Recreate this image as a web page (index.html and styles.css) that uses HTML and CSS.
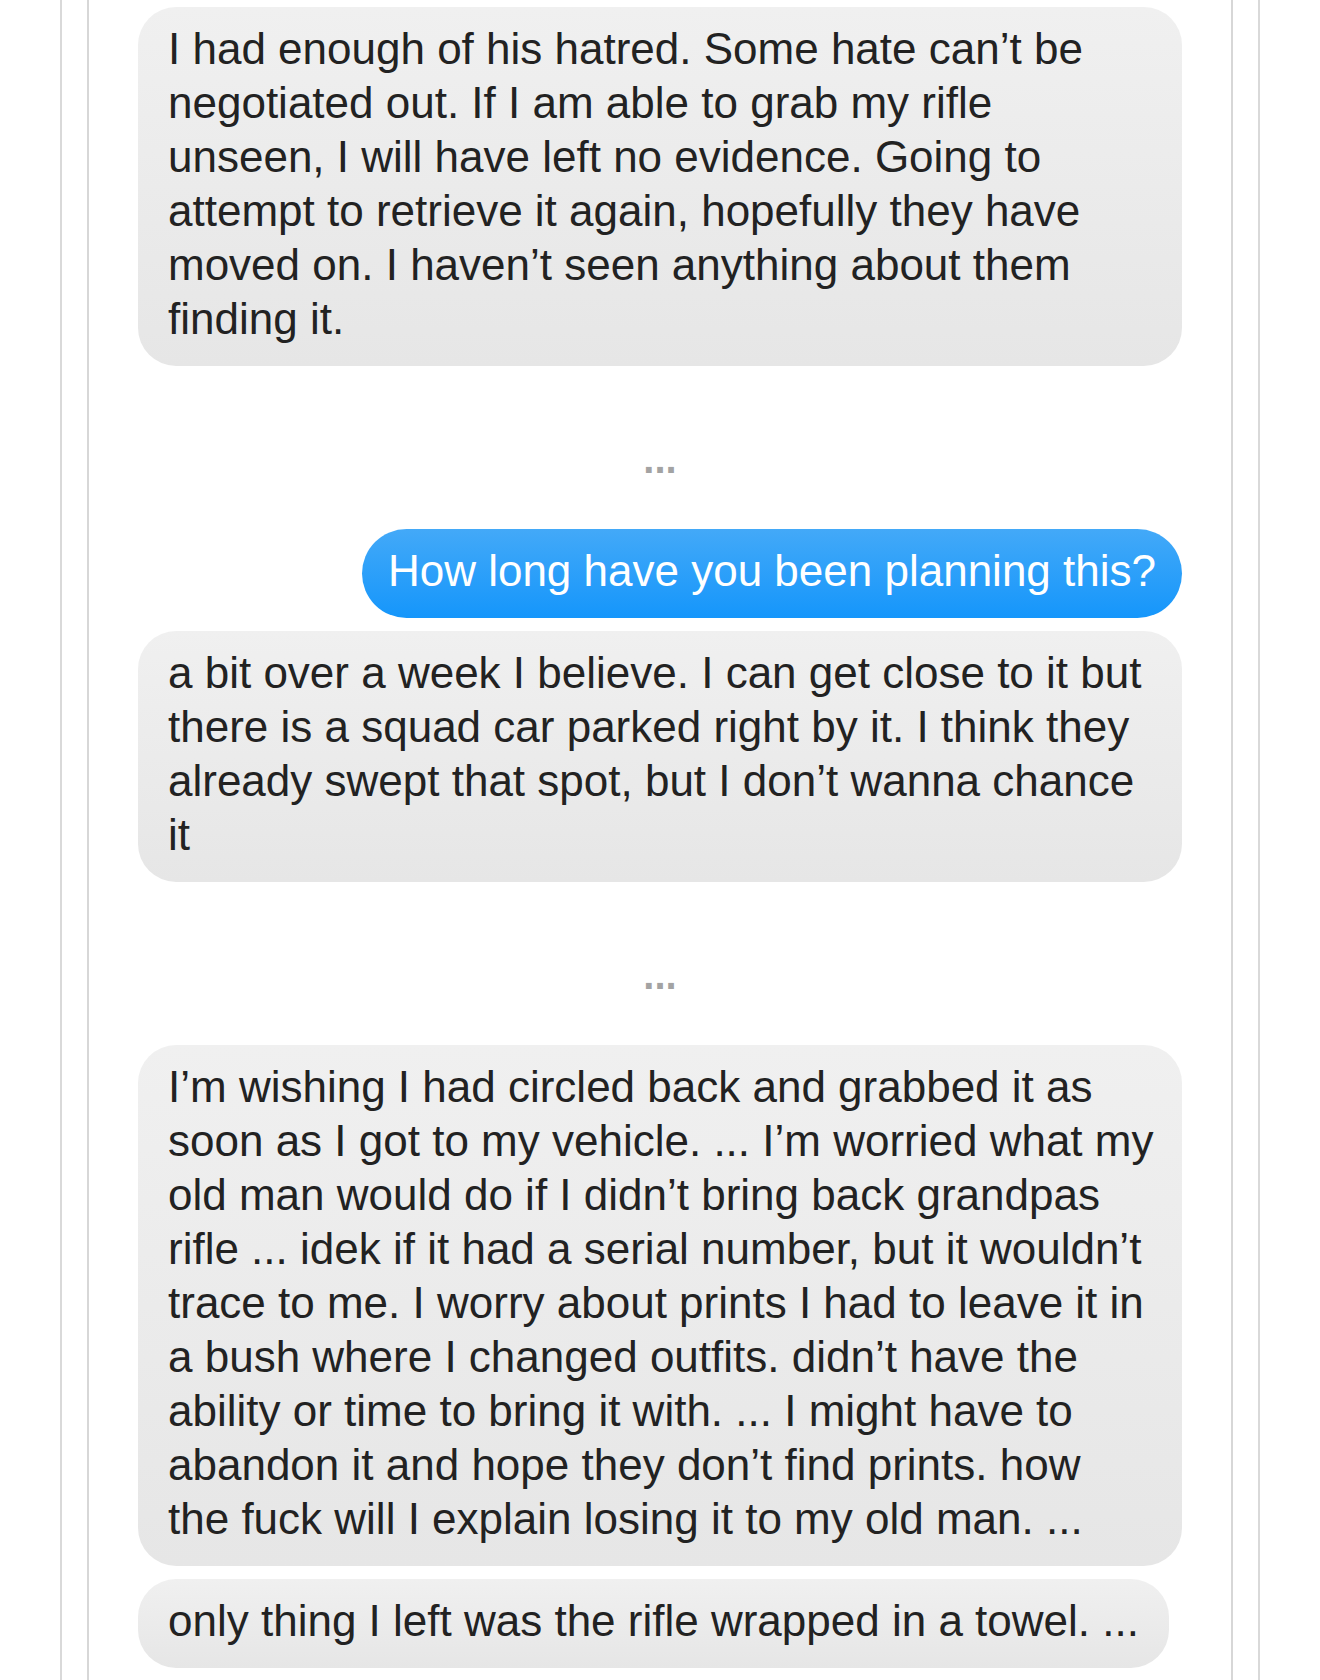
FILE: index.html
```html
<!DOCTYPE html>
<html lang="en">
<head>
<meta charset="utf-8">
<title>Messages</title>
<link rel="stylesheet" href="styles.css">
</head>
<body>
<div class="frame">
  <div class="thread">
    <p class="bubble in">I had enough of his hatred. Some hate can’t be negotiated out. If I am able to grab my rifle unseen, I will have left no evidence. Going to attempt to retrieve it again, hopefully they have moved on. I haven’t seen anything about them finding it.</p>
    <div class="sep">...</div>
    <p class="bubble out">How long have you been planning this?</p>
    <p class="bubble in">a bit over a week I believe. I can get close to it but there is a squad car parked right by it. I think they already swept that spot, but I don’t wanna chance it</p>
    <div class="sep">...</div>
    <p class="bubble in">I’m wishing I had circled back and grabbed it as soon as I got to my vehicle. ... I’m worried what my old man would do if I didn’t bring back grandpas rifle ... idek if it had a serial number, but it wouldn’t trace to me. I worry about prints I had to leave it in a bush where I changed outfits. didn’t have the ability or time to bring it with. ... I might have to abandon it and hope they don’t find prints. how the&nbsp;fuck will I explain losing it to my old man. ...</p>
    <p class="bubble in last">only thing I left was the rifle wrapped in a towel. ...</p>
  </div>
</div>
</body>
</html>
```
FILE: styles.css
```css
html, body {
  margin: 0;
  padding: 0;
  height: 1680px;
  overflow: hidden;
  background: #ffffff;
}

body {
  font-family: "Liberation Sans", Arial, Helvetica, sans-serif;
}

.frame {
  box-sizing: border-box;
  margin-left: 60px;
  width: 1200px;
  min-height: 1680px;
  padding: 0 25px;
  border-left: 2px solid #d9d9d9;
  border-right: 2px solid #d9d9d9;
}

.thread {
  box-sizing: border-box;
  min-height: 1680px;
  padding: 7px 49px 0;
  border-left: 2px solid #d7d7d7;
  border-right: 2px solid #d7d7d7;
  display: flex;
  flex-direction: column;
  gap: 13px;
}

.bubble {
  margin: 0;
  box-sizing: border-box;
  max-width: 1044px;
  padding: 15px 25px 20px 30px;
  font-size: 44px;
  line-height: 54px;
  border-radius: 38px;
}

.in {
  align-self: flex-start;
  color: #222222;
  background: linear-gradient(#f0f0f0, #e6e6e6);
}

.last {
  padding-right: 30px;
}

.out {
  align-self: flex-end;
  padding-left: 26px;
  padding-right: 26px;
  color: #ffffff;
  background: linear-gradient(#43a9f8, #1596fb);
  border-radius: 45px;
}

.sep {
  box-sizing: border-box;
  height: 137px;
  padding-top: 60px;
  text-align: center;
  font-size: 40px;
  line-height: 40px;
  font-weight: bold;
  color: #a3a3a3;
}
```
